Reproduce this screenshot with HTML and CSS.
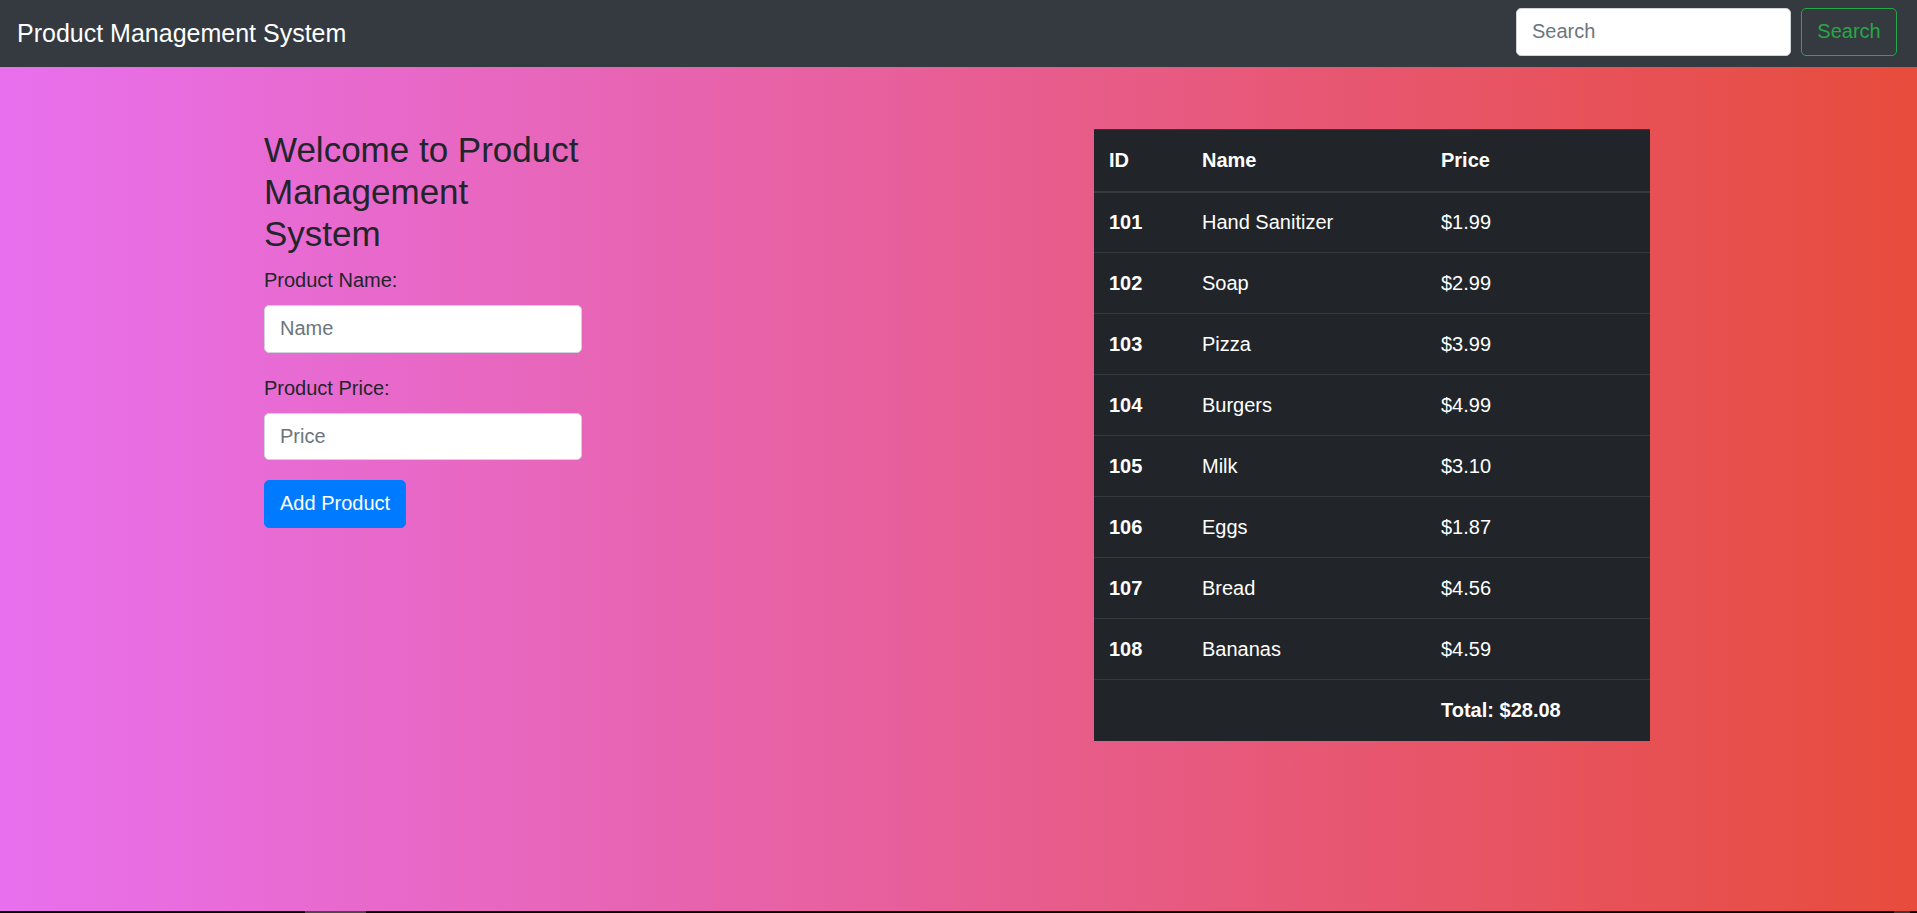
FILE: index.html
```html
<!DOCTYPE html>
<html lang="en">
<head>
<meta charset="utf-8">
<title>Product Management System</title>
<link rel="stylesheet" href="styles.css">
</head>
<body>
<nav class="navbar">
  <a class="brand" href="#">Product Management System</a>
  <form class="search-form">
    <input class="form-control search-input" type="search" placeholder="Search">
    <button class="btn-outline-success" type="button">Search</button>
  </form>
</nav>
<main class="main">
  <div class="container">
    <section class="left-col">
      <h3 class="title">Welcome to Product Management System</h3>
      <div class="form-group">
        <label class="label">Product Name:</label>
        <input class="form-control" type="text" placeholder="Name">
      </div>
      <div class="form-group">
        <label class="label">Product Price:</label>
        <input class="form-control" type="text" placeholder="Price">
      </div>
      <button class="btn-primary" type="button">Add Product</button>
    </section>
    <section class="right-col">
      <table class="table">
        <colgroup>
          <col class="c-id"><col class="c-name"><col class="c-price">
        </colgroup>
        <thead>
          <tr><th>ID</th><th>Name</th><th>Price</th></tr>
        </thead>
        <tbody>
          <tr><th>101</th><td>Hand Sanitizer</td><td>$1.99</td></tr>
          <tr><th>102</th><td>Soap</td><td>$2.99</td></tr>
          <tr><th>103</th><td>Pizza</td><td>$3.99</td></tr>
          <tr><th>104</th><td>Burgers</td><td>$4.99</td></tr>
          <tr><th>105</th><td>Milk</td><td>$3.10</td></tr>
          <tr><th>106</th><td>Eggs</td><td>$1.87</td></tr>
          <tr><th>107</th><td>Bread</td><td>$4.56</td></tr>
          <tr><th>108</th><td>Bananas</td><td>$4.59</td></tr>
          <tr><td></td><td></td><th>Total: $28.08</th></tr>
        </tbody>
      </table>
    </section>
  </div>
</main>
<div class="hscroll">
  <div class="thumb"></div>
  <div class="end-bit"></div>
</div>
</body>
</html>
```
FILE: styles.css
```css
* { box-sizing: border-box; }

html, body { height: 100%; }

body {
  margin: 0;
  font-family: "Liberation Sans", Arial, sans-serif;
  font-size: 20px;
  line-height: 1.5;
  color: #212529;
  display: flex;
  flex-direction: column;
  min-height: 913px;
  overflow: hidden;
}

.navbar {
  height: 67px;
  flex: none;
  background: #343a40;
  display: flex;
  align-items: flex-start;
  justify-content: space-between;
  padding: 8px 20px 0 17px;
}

.brand {
  margin-top: 6.5px;
  font-size: 25px;
  line-height: 37.5px;
  color: #fff;
  text-decoration: none;
}

.search-form {
  display: flex;
  gap: 10px;
}

.form-control {
  display: block;
  width: 100%;
  height: 47.5px;
  padding: 0 15px;
  font-family: inherit;
  font-size: 20px;
  color: #495057;
  background: #fff;
  border: 1.25px solid #ced4da;
  border-radius: 5px;
  outline: none;
}

.form-control::placeholder { color: #6c757d; opacity: 1; }

.search-input { width: 275px; }

.btn-outline-success {
  height: 47.5px;
  width: 96px;
  padding: 0;
  font-family: inherit;
  font-size: 20px;
  color: #28a745;
  background: transparent;
  border: 1.25px solid #28a745;
  border-radius: 5px;
}

.main {
  flex: 1;
  background: linear-gradient(to right, #e870ee, #e74c3c);
  padding-top: 62px;
}

.container {
  width: 1425px;
  margin: 0 auto;
  padding: 0 18px;
  display: flex;
  align-items: flex-start;
}

.left-col {
  width: 318px;
  flex: none;
}

.title {
  width: 318px;
  margin: 0 0 10px;
  font-size: 35px;
  line-height: 42px;
  font-weight: 400;
  color: #212529;
}

.form-group { margin-bottom: 20px; }

.label {
  display: block;
  margin-bottom: 10px;
  line-height: 30px;
}

.btn-primary {
  height: 47.5px;
  padding: 0 15px;
  font-family: inherit;
  font-size: 20px;
  color: #fff;
  background: #007bff;
  border: 1.25px solid #007bff;
  border-radius: 5px;
}

.right-col {
  margin-left: 512px;
  flex: none;
}

.table {
  width: 556px;
  border-collapse: collapse;
  background: #212529;
  color: #fff;
  table-layout: fixed;
}

.c-id { width: 93px; }
.c-name { width: 239px; }
.c-price { width: 224px; }

.table th,
.table td {
  height: 61px;
  padding: 0 15px;
  text-align: left;
  vertical-align: middle;
  line-height: 30px;
  border-top: 1px solid #32383e;
}

.table th { font-weight: 700; }
.table td { font-weight: 400; }

.table thead th {
  height: 62px;
  border-bottom: 2px solid #373b3e;
}

.hscroll {
  height: 2px;
  flex: none;
  background: #000;
  display: flex;
}

.thumb {
  margin-left: 305px;
  width: 61px;
  background: #4a4a4a;
}

.end-bit {
  margin-left: auto;
  margin-right: 7px;
  width: 16px;
  background: #3a3a3a;
}
```
